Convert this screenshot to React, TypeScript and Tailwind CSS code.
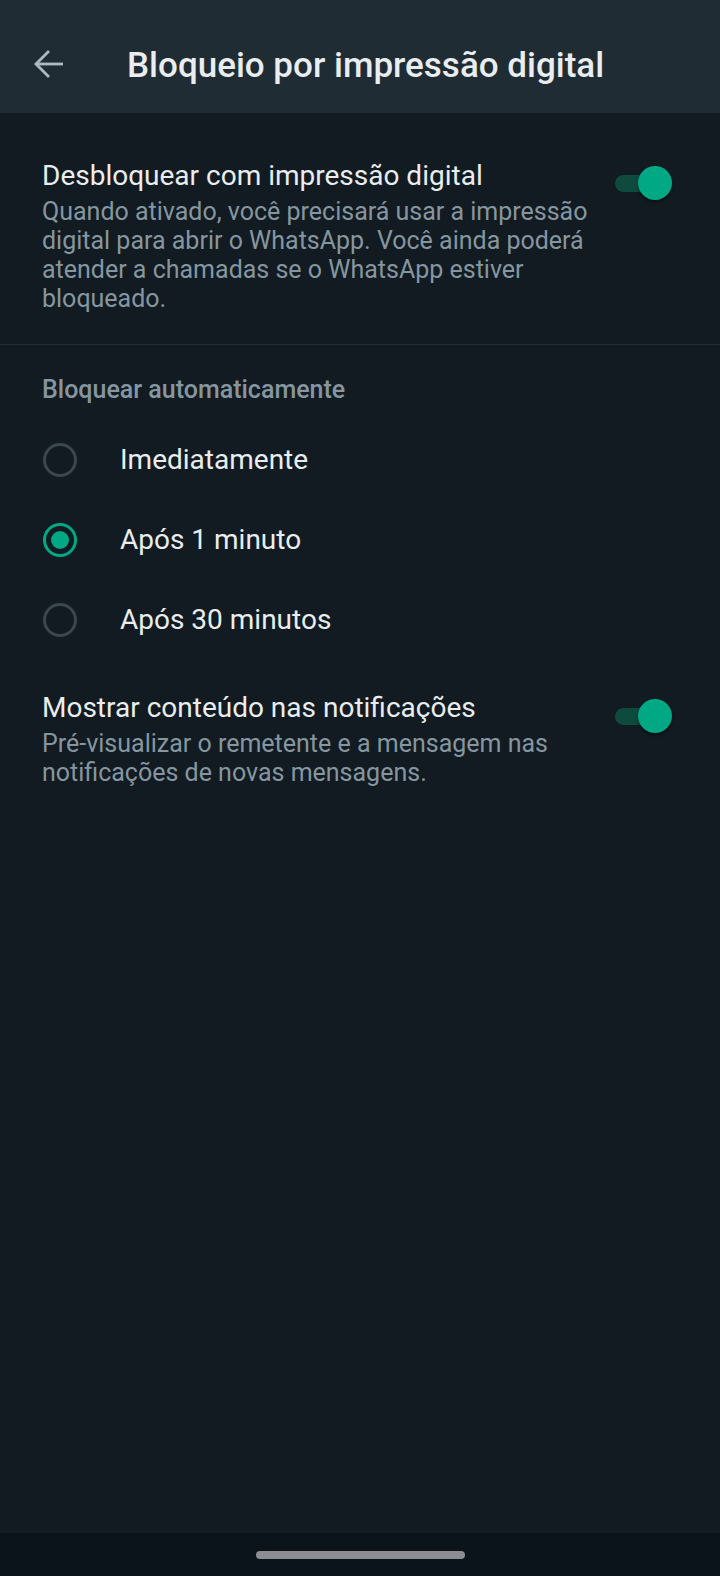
import React from "react";

const font = { fontFamily: "Roboto, 'Noto Sans', sans-serif" };

function Toggle() {
  return (
    <div className="relative w-[58px] h-[36px] flex items-center shrink-0">
      <div className="w-[50px] h-[17px] rounded-full bg-[#0f4a3f] ml-[1px]" />
      <div className="absolute right-0 top-[1px] w-[34px] h-[34px] rounded-full bg-[#00a884] shadow-[0_2px_3px_rgba(0,0,0,0.45)]" />
    </div>
  );
}

function Radio({ checked, label }: { checked?: boolean; label: string }) {
  return (
    <div className="h-[80px] flex items-center">
      <div className="w-[78px] pl-[1px]">
        {checked ? (
          <div className="w-[34px] h-[34px] rounded-full border-[3px] border-[#00a884] flex items-center justify-center">
            <div className="w-[18px] h-[18px] rounded-full bg-[#00a884]" />
          </div>
        ) : (
          <div className="w-[34px] h-[34px] rounded-full border-[3px] border-[#3b4750]" />
        )}
      </div>
      <span className="text-[28px] leading-[32px] text-[#e9edef]">{label}</span>
    </div>
  );
}

export default function App() {
  return (
    <div className="w-[720px] h-[1576px] bg-[#111b21] flex flex-col" style={font}>
      <header className="h-[113px] bg-[#202c33] flex items-center pt-[15px] shrink-0">
        <div className="w-[127px] flex items-center pl-[34px]">
          <svg width="30" height="30" viewBox="0 0 30 30" fill="none" stroke="#aebac1" strokeWidth="2.8" strokeLinecap="butt">
            <path d="M2 15H29" />
            <path d="M15 2L2 15L15 28" />
          </svg>
        </div>
        <h1 className="pt-[4px] text-[35px] leading-[40px] font-medium text-[#e9edef] whitespace-nowrap">Bloqueio por impressão digital</h1>
      </header>

      <main className="flex-1 flex flex-col">
        <section className="pt-[47px] pb-[31px] pl-[42px] pr-[48px] flex items-start border-b border-[#222d34]">
          <div className="flex-1">
            <div className="text-[28px] leading-[32px] text-[#e9edef] whitespace-nowrap">Desbloquear com impressão digital</div>
            <div className="mt-[5px] text-[25px] leading-[29px] text-[#8696a0] w-[560px]">
              Quando ativado, você precisará usar a impressão digital para abrir o WhatsApp. Você ainda poderá atender a chamadas se o WhatsApp estiver bloqueado.
            </div>
          </div>
          <div className="mt-[5px]">
            <Toggle />
          </div>
        </section>

        <section className="pt-[30px] pl-[42px]">
          <div className="text-[25px] leading-[29px] font-medium text-[#8696a0]">Bloquear automaticamente</div>
          <div className="mt-[16px] flex flex-col">
            <Radio label="Imediatamente" />
            <Radio checked label="Após 1 minuto" />
            <Radio label="Após 30 minutos" />
          </div>
        </section>

        <section className="pt-[32px] pl-[42px] pr-[48px] flex items-start">
          <div className="flex-1">
            <div className="text-[28px] leading-[32px] text-[#e9edef] whitespace-nowrap">Mostrar conteúdo nas notificações</div>
            <div className="mt-[5px] text-[25px] leading-[29px] text-[#8696a0] w-[560px]">
              Pré-visualizar o remetente e a mensagem nas notificações de novas mensagens.
            </div>
          </div>
          <div className="mt-[6px]">
            <Toggle />
          </div>
        </section>
      </main>

      <footer className="h-[43px] bg-[#0b141a] flex items-center justify-center shrink-0">
        <div className="w-[209px] h-[8px] rounded-full bg-[#8a8e93]" />
      </footer>
    </div>
  );
}
